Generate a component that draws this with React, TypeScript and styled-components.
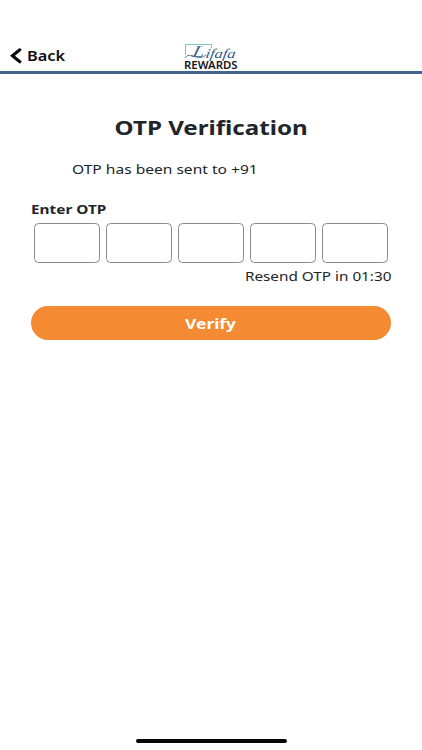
import React from "react";
import styled, { createGlobalStyle } from "styled-components";

const GlobalStyle = createGlobalStyle`
  * { box-sizing: border-box; }
  body {
    margin: 0;
    background: #fff;
    color: #212529;
    font-family: "Noto Sans", "Open Sans", sans-serif;
  }
  button, input { font: inherit; }
`;

const Screen = styled.div`
  display: flex;
  flex-direction: column;
  width: 100%;
  height: 750px;
  overflow: hidden;
  background: #fff;
`;

const Header = styled.header`
  display: grid;
  grid-template-columns: 1fr 56px 1fr;
  height: 74px;
  padding-top: 40px;
  border-bottom: 3px solid #41658d;
`;

const Wide = styled.span<{ $scale: number; $origin?: string }>`
  display: inline-block;
  white-space: nowrap;
  transform: scaleX(${(p) => p.$scale});
  transform-origin: ${(p) => p.$origin ?? "left"} center;
`;

const BackButton = styled.button`
  display: flex;
  align-items: center;
  justify-self: start;
  gap: 5px;
  height: 31px;
  padding: 0 0 0 10px;
  border: 0;
  background: none;
  color: #0b0b0d;
  font-size: 14.3px;
  font-weight: 600;
  line-height: 20px;
`;

const LogoArt = styled.svg`
  display: block;
  width: 56px;
  height: 31px;
  overflow: visible;
`;

const Content = styled.main`
  display: flex;
  flex-direction: column;
  padding: 0 31px;
`;

const Title = styled.h1`
  margin: 39px 0 0;
  text-align: center;
  font-size: 20.3px;
  font-weight: 700;
  line-height: 28px;
`;

const Message = styled.p`
  margin: 18px 0 0 41px;
  font-size: 13.3px;
  line-height: 20px;
`;

const Label = styled.label`
  margin-top: 20px;
  font-size: 12.7px;
  font-weight: 700;
  line-height: 20px;
`;

const CodeRow = styled.div`
  display: grid;
  grid-template-columns: repeat(5, 1fr);
  gap: 6.3px;
  margin-top: 4px;
  padding: 0 3px;
`;

const DigitInput = styled.input`
  width: 100%;
  height: 40px;
  padding: 0;
  border: 1px solid #8a8a8a;
  border-radius: 4.5px;
  background: #fff;
  text-align: center;
  outline: none;
`;

const Timer = styled.p`
  margin: 3px 0 0;
  text-align: right;
  font-size: 13.3px;
  line-height: 20px;
`;

const VerifyButton = styled.button`
  height: 34px;
  margin-top: 20px;
  padding: 2px 0 0;
  border: 0;
  border-radius: 17px;
  background: #f48a31;
  color: #fff;
  font-size: 14px;
  font-weight: 700;
  line-height: 20px;
`;

const HomeIndicator = styled.div`
  width: 151px;
  height: 4px;
  margin: auto auto 7px;
  border-radius: 2px;
  background: #050505;
`;

function Logo() {
  return (
    <LogoArt viewBox="0 0 56 31" role="img" aria-label="Lifafa Rewards">
      <path d="M2.5 15V4.5H28.5V8" fill="none" stroke="#62b8b5" strokeWidth="0.8" />
      <path d="M2.5 17.5C4 14.5 8 15 12 16.6C17 18.6 20 17.5 23 15" fill="none" stroke="#41668c" strokeWidth="0.9" strokeLinecap="round" />
      <text x="8.5" y="17" fontFamily="Liberation Serif, serif" fontStyle="italic" fontSize="17" textLength="12" lengthAdjust="spacingAndGlyphs" fill="#41668c" transform="translate(4.2 0) skewX(-14)">L</text>
      <text x="22" y="18" fontFamily="Liberation Serif, serif" fontStyle="italic" fontSize="13.5" textLength="30" lengthAdjust="spacingAndGlyphs" fill="#31587f" transform="translate(3.2 0) skewX(-10)">ifafa</text>
      <text x="1" y="29.3" fontFamily="Noto Sans, sans-serif" fontWeight="600" fontSize="10.3" textLength="53.5" lengthAdjust="spacingAndGlyphs" fill="#151517">REWARDS</text>
    </LogoArt>
  );
}

export default function App() {
  return (
    <>
      <GlobalStyle />
      <Screen>
        <Header>
          <BackButton type="button">
            <svg width="12" height="16" viewBox="0 0 12 16" fill="none" aria-hidden="true">
              <path d="M9.8 1.8L2.4 7.8L9.8 13.8" stroke="#0b0b0d" strokeWidth="3.1" strokeLinecap="round" strokeLinejoin="miter" />
            </svg>
            <Wide $scale={1.14}>Back</Wide>
          </BackButton>
          <Logo />
        </Header>
        <Content>
          <Title><Wide $scale={1.19} $origin="center">OTP Verification</Wide></Title>
          <Message><Wide $scale={1.17}>OTP has been sent to +91</Wide></Message>
          <Label htmlFor="digit-1"><Wide $scale={1.21}>Enter OTP</Wide></Label>
          <CodeRow>
            {[1, 2, 3, 4, 5].map((n) => (
              <DigitInput key={n} id={`digit-${n}`} inputMode="numeric" maxLength={1} aria-label={`Digit ${n}`} />
            ))}
          </CodeRow>
          <Timer><Wide $scale={1.15} $origin="right">Resend OTP in 01:30</Wide></Timer>
          <VerifyButton type="button"><Wide $scale={1.24} $origin="center">Verify</Wide></VerifyButton>
        </Content>
        <HomeIndicator />
      </Screen>
    </>
  );
}
